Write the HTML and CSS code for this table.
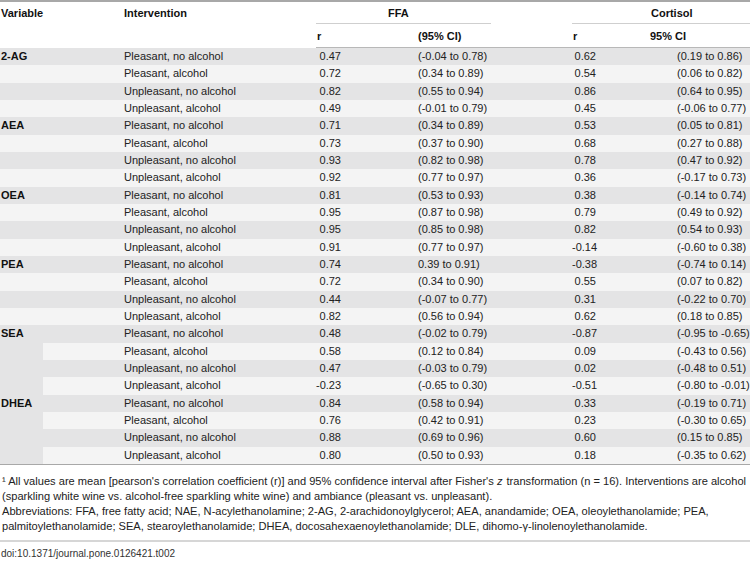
FILE: index.html
```html
<!DOCTYPE html>
<html lang="en">
<head>
    <meta charset="UTF-8">
    <title>Table 2 - correlations</title>
    <link rel="stylesheet" href="styles.css">
</head>
<body>
    <table class="data">
        <colgroup>
            <col class="c-var">
            <col class="c-int">
            <col class="c-r1">
            <col class="c-ci1">
            <col class="c-r2">
            <col class="c-ci2">
        </colgroup>
        <thead>
            <tr class="head-top">
                <th rowspan="2" class="var">Variable</th>
                <th rowspan="2" class="int">Intervention</th>
                <th colspan="2" class="grp grp-ffa"><div>FFA</div></th>
                <th colspan="2" class="grp grp-cort"><div>Cortisol</div></th>
            </tr>
            <tr class="head-sub">
                <th class="r">r</th>
                <th class="ci">(95% CI)</th>
                <th class="r">r</th>
                <th class="ci ci-cort">95% CI</th>
            </tr>
        </thead>
        <tbody>
            <!-- 2-AG -->
            <tr><td class="var">2-AG</td><td class="int">Pleasant, no alcohol</td><td class="num">0.47</td><td class="ci">(-0.04 to 0.78)</td><td class="num">0.62</td><td class="ci2">(0.19 to 0.86)</td></tr>
            <tr><td class="var"></td><td class="int">Pleasant, alcohol</td><td class="num">0.72</td><td class="ci">(0.34 to 0.89)</td><td class="num">0.54</td><td class="ci2">(0.06 to 0.82)</td></tr>
            <tr><td class="var"></td><td class="int">Unpleasant, no alcohol</td><td class="num">0.82</td><td class="ci">(0.55 to 0.94)</td><td class="num">0.86</td><td class="ci2">(0.64 to 0.95)</td></tr>
            <tr><td class="var"></td><td class="int">Unpleasant, alcohol</td><td class="num">0.49</td><td class="ci">(-0.01 to 0.79)</td><td class="num">0.45</td><td class="ci2">(-0.06 to 0.77)</td></tr>
            <!-- AEA -->
            <tr><td class="var">AEA</td><td class="int">Pleasant, no alcohol</td><td class="num">0.71</td><td class="ci">(0.34 to 0.89)</td><td class="num">0.53</td><td class="ci2">(0.05 to 0.81)</td></tr>
            <tr><td class="var"></td><td class="int">Pleasant, alcohol</td><td class="num">0.73</td><td class="ci">(0.37 to 0.90)</td><td class="num">0.68</td><td class="ci2">(0.27 to 0.88)</td></tr>
            <tr><td class="var"></td><td class="int">Unpleasant, no alcohol</td><td class="num">0.93</td><td class="ci">(0.82 to 0.98)</td><td class="num">0.78</td><td class="ci2">(0.47 to 0.92)</td></tr>
            <tr><td class="var"></td><td class="int">Unpleasant, alcohol</td><td class="num">0.92</td><td class="ci">(0.77 to 0.97)</td><td class="num">0.36</td><td class="ci2">(-0.17 to 0.73)</td></tr>
            <!-- OEA -->
            <tr><td class="var">OEA</td><td class="int">Pleasant, no alcohol</td><td class="num">0.81</td><td class="ci">(0.53 to 0.93)</td><td class="num">0.38</td><td class="ci2">(-0.14 to 0.74)</td></tr>
            <tr><td class="var"></td><td class="int">Pleasant, alcohol</td><td class="num">0.95</td><td class="ci">(0.87 to 0.98)</td><td class="num">0.79</td><td class="ci2">(0.49 to 0.92)</td></tr>
            <tr><td class="var"></td><td class="int">Unpleasant, no alcohol</td><td class="num">0.95</td><td class="ci">(0.85 to 0.98)</td><td class="num">0.82</td><td class="ci2">(0.54 to 0.93)</td></tr>
            <tr><td class="var"></td><td class="int">Unpleasant, alcohol</td><td class="num">0.91</td><td class="ci">(0.77 to 0.97)</td><td class="num">-0.14</td><td class="ci2">(-0.60 to 0.38)</td></tr>
            <!-- PEA -->
            <tr><td class="var">PEA</td><td class="int">Pleasant, no alcohol</td><td class="num">0.74</td><td class="ci">0.39 to 0.91)</td><td class="num">-0.38</td><td class="ci2">(-0.74 to 0.14)</td></tr>
            <tr><td class="var"></td><td class="int">Pleasant, alcohol</td><td class="num">0.72</td><td class="ci">(0.34 to 0.90)</td><td class="num">0.55</td><td class="ci2">(0.07 to 0.82)</td></tr>
            <tr><td class="var"></td><td class="int">Unpleasant, no alcohol</td><td class="num">0.44</td><td class="ci">(-0.07 to 0.77)</td><td class="num">0.31</td><td class="ci2">(-0.22 to 0.70)</td></tr>
            <tr><td class="var"></td><td class="int">Unpleasant, alcohol</td><td class="num">0.82</td><td class="ci">(0.56 to 0.94)</td><td class="num">0.62</td><td class="ci2">(0.18 to 0.85)</td></tr>
            <!-- SEA -->
            <tr><td class="var span" rowspan="4">SEA</td><td class="int">Pleasant, no alcohol</td><td class="num">0.48</td><td class="ci">(-0.02 to 0.79)</td><td class="num">-0.87</td><td class="ci2">(-0.95 to -0.65)</td></tr>
            <tr><td class="int">Pleasant, alcohol</td><td class="num">0.58</td><td class="ci">(0.12 to 0.84)</td><td class="num">0.09</td><td class="ci2">(-0.43 to 0.56)</td></tr>
            <tr><td class="int">Unpleasant, no alcohol</td><td class="num">0.47</td><td class="ci">(-0.03 to 0.79)</td><td class="num">0.02</td><td class="ci2">(-0.48 to 0.51)</td></tr>
            <tr><td class="int">Unpleasant, alcohol</td><td class="num">-0.23</td><td class="ci">(-0.65 to 0.30)</td><td class="num">-0.51</td><td class="ci2">(-0.80 to -0.01)</td></tr>
            <!-- DHEA -->
            <tr><td class="var span" rowspan="4">DHEA</td><td class="int">Pleasant, no alcohol</td><td class="num">0.84</td><td class="ci">(0.58 to 0.94)</td><td class="num">0.33</td><td class="ci2">(-0.19 to 0.71)</td></tr>
            <tr><td class="int">Pleasant, alcohol</td><td class="num">0.76</td><td class="ci">(0.42 to 0.91)</td><td class="num">0.23</td><td class="ci2">(-0.30 to 0.65)</td></tr>
            <tr><td class="int">Unpleasant, no alcohol</td><td class="num">0.88</td><td class="ci">(0.69 to 0.96)</td><td class="num">0.60</td><td class="ci2">(0.15 to 0.85)</td></tr>
            <tr><td class="int">Unpleasant, alcohol</td><td class="num">0.80</td><td class="ci">(0.50 to 0.93)</td><td class="num">0.18</td><td class="ci2">(-0.35 to 0.62)</td></tr>
        </tbody>
    </table>

    <div class="notes">
        <p>¹ All values are mean [pearson's correlation coefficient (r)] and 95% confidence interval after Fisher's <i>z</i> transformation (n = 16). Interventions are alcohol<br>(sparkling white wine vs. alcohol-free sparkling white wine) and ambiance (pleasant vs. unpleasant).</p>
        <p>Abbreviations: FFA, free fatty acid; NAE, N-acylethanolamine; 2-AG, 2-arachidonoylglycerol; AEA, anandamide; OEA, oleoylethanolamide; PEA, palmitoylethanolamide; SEA, stearoylethanolamide; DHEA, docosahexaenoylethanolamide; DLE, dihomo-γ-linolenoylethanolamide.</p>
    </div>

    <div class="doi">doi:10.1371/journal.pone.0126421.t002</div>
</body>
</html>
```

FILE: styles.css
```css
:root {
    --stripe-dark: #e4e4e5;
    --stripe-light: #f4f4f4;
    --rule: #a8a8a8;
    --text: #222222;
}

body {
    margin: 0;
    padding: 0;
    width: 750px;
    font-family: "Liberation Sans", Arial, sans-serif;
    font-size: 11px;
    color: var(--text);
    background: #ffffff;
}

/* table */
.data {
    width: 750px;
    border-collapse: collapse;
    table-layout: fixed;
    border-top: 2px solid var(--rule);
    border-bottom: 1px solid var(--rule);
}

.c-var { width: 43px; }
.c-int { width: 273px; }
.c-r1  { width: 102px; }
.c-ci1 { width: 154px; }
.c-r2  { width: 78px; }
.c-ci2 { width: 100px; }

.data th {
    font-weight: bold;
    color: #111111;
    text-align: left;
    vertical-align: middle;
    padding: 0;
    white-space: nowrap;
}

.head-top th {
    height: 22px;
}

.head-top th.var,
.head-top th.int {
    vertical-align: top;
    padding-top: 5px;
}

.head-top th.var {
    padding-left: 1px;
}

.head-top th.int {
    padding-left: 81px;
}

.grp div {
    height: 21px;
    line-height: 22px;
    border-bottom: 1px solid #cfcfcf;
}

.grp-ffa div {
    margin-right: 81px;
    padding-left: 72px;
}

.grp-cort div {
    padding-left: 79px;
}

.head-sub th {
    height: 23px;
    border-bottom: 1px solid #b8b8b8;
}

.head-sub th.r {
    padding-left: 1px;
}

/* body rows */
.data td {
    height: 17.33px;
    padding: 0;
    line-height: 17px;
    white-space: nowrap;
}

.data tbody tr:nth-child(odd) {
    background: var(--stripe-dark);
}

.data tbody tr:nth-child(even) {
    background: var(--stripe-light);
}

.data td.var {
    font-weight: bold;
    color: #111111;
    padding-left: 1px;
    vertical-align: top;
}

.data td.span {
    background: var(--stripe-dark);
}

.data td.int {
    padding-left: 81px;
}

.data td.num {
    text-align: right;
}

.data tbody td:nth-last-child(4) {
    padding-right: 77px;
}

.data tbody td:nth-last-child(2) {
    padding-right: 54px;
}

.data td.ci2 {
    padding-left: 27px;
}

/* footnotes */
.notes {
    padding: 9px 2px 6px 2px;
    border-bottom: 2px solid #d6d6d6;
    font-size: 11.1px;
    line-height: 15px;
}

.notes p {
    margin: 0;
}

.notes i {
    padding-right: 1px;
}

.doi {
    padding: 6px 0 0 1px;
    font-size: 10px;
    color: #333333;
}
```
